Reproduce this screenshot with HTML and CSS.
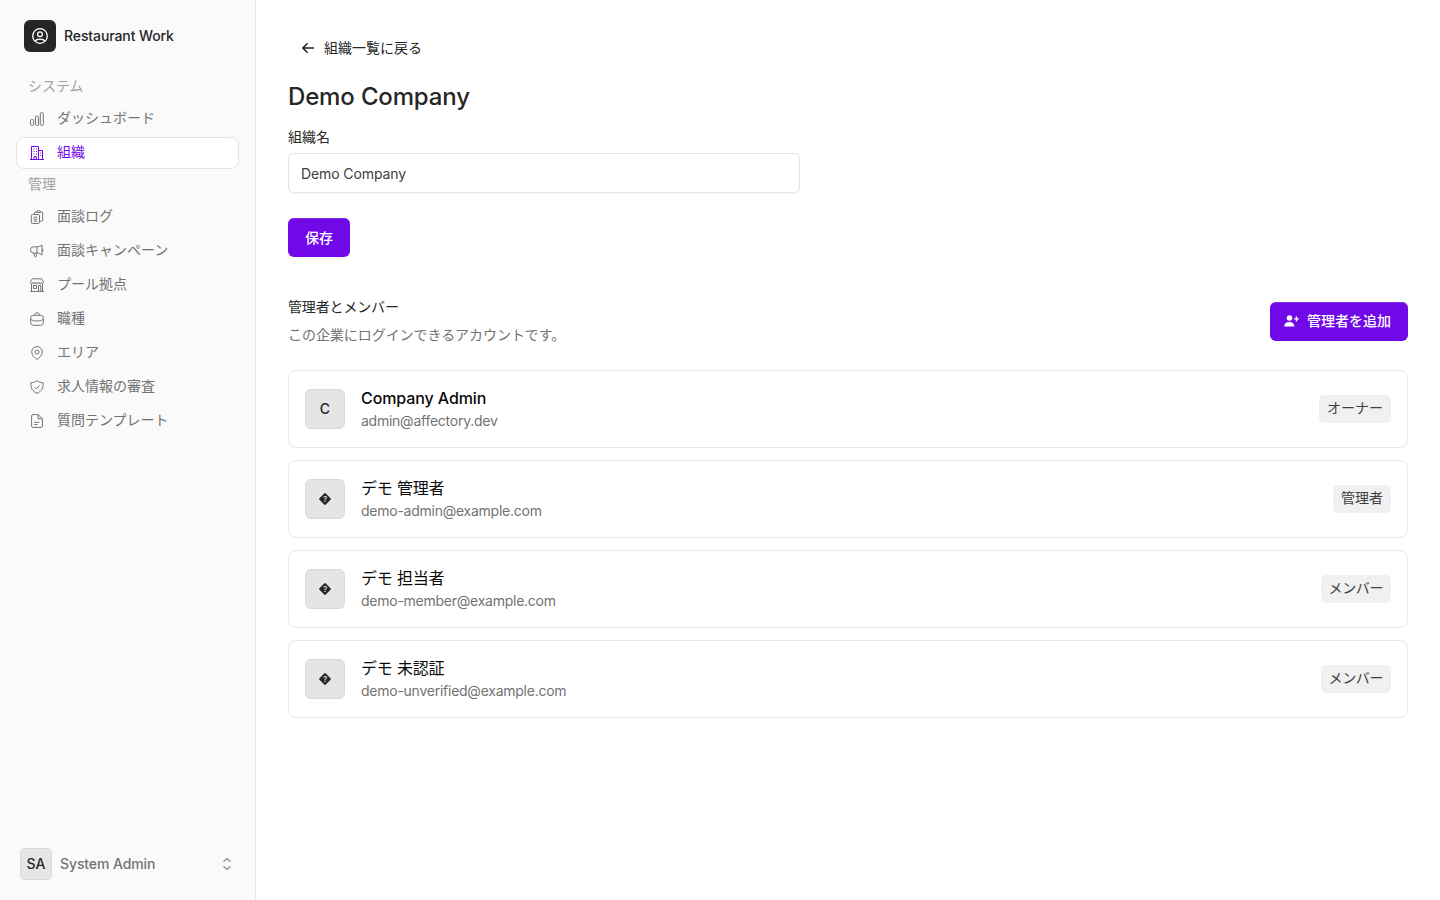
FILE: index.html
```html
<!DOCTYPE html>
<html lang="ja">
<head>
  <meta charset="UTF-8" />
  <meta name="viewport" content="width=device-width, initial-scale=1.0" />
  <title>Restaurant Work</title>
  <link rel="stylesheet" href="styles.css">
</head>
<body>
  <aside class="sidebar">
    <div class="brand">
      <span class="brand-logo">
        <svg width="18" height="18" viewBox="0 0 18 18"><circle cx="9" cy="9" r="7.3"/><circle cx="9" cy="7.2" r="2.4"/><path d="M4.2 14.3c.7-1.6 2.3-2.1 4.8-2.1s4.1.5 4.8 2.1"/></svg>
      </span>
      <span class="brand-name">Restaurant Work</span>
    </div>

    <nav>
      <div class="nav-label">システム</div>
      <ul class="nav-list">
        <li><a class="nav-item" href="#">
          <svg class="icon" viewBox="0 0 14 14"><rect x=".6" y="7.5" width="3" height="5.9" rx="1"/><rect x="5.5" y="4.2" width="3" height="9.2" rx="1"/><rect x="10.3" y=".6" width="3" height="12.8" rx="1"/></svg>
          <span>ダッシュボード</span></a></li>
        <li><a class="nav-item active" href="#">
          <svg class="icon" viewBox="0 0 14 14"><path d="M0 13.5h14M1.5 13.5V.5h7v13M8.500 4.500h4v9M3.500 3h1M6 3h1M3.500 5.500h1M6 5.500h1M3.500 8h1M6 8h1M10.200 7h1M10.200 9.500h1M4 13.500v-3h2.200v3"/></svg>
          <span>組織</span></a></li>
      </ul>
      <div class="nav-label">管理</div>
      <ul class="nav-list">
        <li><a class="nav-item" href="#">
          <svg class="icon" viewBox="0 0 14 14"><path d="M4.500 4V3c0-.8.5-1.300 1.300-1.300h.7M10.500 1.700h.9c.8 0 1.300.5 1.300 1.300v7c0 .8-.5 1.300-1.300 1.300H9.500M6.500 2.500c0-1.200.7-1.900 2-1.900s2 .7 2 1.900z"/><rect x="1.300" y="4.500" width="8.200" height="9" rx="1.300"/><path d="M3.500 7.200h3.800M3.500 9.200h3.800M3.500 11.200h3.800"/></svg>
          <span>面談ログ</span></a></li>
        <li><a class="nav-item" href="#">
          <svg class="icon" viewBox="0 0 14 14"><path d="M7 2.800H3.600a3.100 3.100 0 0 0 0 6.200H7c1.800.1 3.500.9 5 2.100V1C10.500 2.100 8.800 2.700 7 2.800zM7 2.800V9M12 4.700c1.300.4 1.300 2.400 0 2.800M3.600 9l1 3.200c.4 1.200 2.200.8 1.900-.4L5.900 9"/></svg>
          <span>面談キャンペーン</span></a></li>
        <li><a class="nav-item" href="#">
          <svg class="icon" viewBox="0 0 14 14"><path d="M2.300.8h9.400l1.700 2.700v1c0 1.400-2.100 1.400-2.100 0 0 1.400-2.200 1.400-2.200 0 0 1.400-2.100 1.400-2.100 0 0 1.400-2.200 1.400-2.200 0 0 1.400-2.100 1.400-2.100 0 0 1.400-2.100 1.400-2.100 0v-1zM1.500 5.600v7.800M12.500 5.600v7.800M0 13.400h14M3.500 7.500h3v3h-3zM8.500 13.400V7.500h2.300v5.900"/></svg>
          <span>プール拠点</span></a></li>
        <li><a class="nav-item" href="#">
          <svg class="icon" viewBox="0 0 14 14"><rect x=".7" y="3.300" width="12.600" height="10" rx="2.600"/><path d="M4.500 3.300c.2-1.700.8-2.500 2.500-2.500s2.300.8 2.500 2.500M.8 7.500c3.500 2 8.900 2 12.400 0"/></svg>
          <span>職種</span></a></li>
        <li><a class="nav-item" href="#">
          <svg class="icon" viewBox="0 0 14 14"><path d="M7 13.500C5 12 1.700 9.300 1.700 5.900a5.300 5.300 0 0 1 10.600 0C12.300 9.300 9 12 7 13.500z"/><circle cx="7" cy="6" r="2"/></svg>
          <span>エリア</span></a></li>
        <li><a class="nav-item" href="#">
          <svg class="icon" viewBox="0 0 14 14"><path d="M7 .7c1.700 1.200 3.600 1.900 6.200 2.100 0 5.200-1.200 8.400-6.200 10.500C2 11.200.8 8 .8 2.800 3.400 2.600 5.300 1.900 7 .7z"/><path d="M4.800 7.300l1.600 1.500L9.300 5.500"/></svg>
          <span>求人情報の審査</span></a></li>
        <li><a class="nav-item" href="#">
          <svg class="icon" viewBox="0 0 14 14"><path d="M8.200.6H2.900c-.8 0-1.300.5-1.300 1.300v10.200c0 .8.5 1.300 1.300 1.300h8.200c.8 0 1.300-.5 1.300-1.300V4.800zM8.200.6v4.200h4.200M4.200 8.300h5.300M4.200 10.500h3.300"/></svg>
          <span>質問テンプレート</span></a></li>
      </ul>
    </nav>

    <div class="user">
      <span class="user-avatar">SA</span>
      <span class="user-name">System Admin</span>
      <svg class="user-toggle" width="10" height="14" viewBox="0 0 10 14"><path d="M1.500 4.800L5 1.500l3.500 3.300M1.500 9.200L5 12.500l3.500-3.300"/></svg>
    </div>
  </aside>

  <main class="content">
    <a class="back" href="#">
      <svg width="12" height="12" viewBox="0 0 12 12"><path d="M5.600 1.200L.9 6l4.700 4.800M1 6h11"/></svg>
      組織一覧に戻る
    </a>
    <h1>Demo Company</h1>

    <form>
      <label for="companyName">組織名</label>
      <input id="companyName" type="text" value="Demo Company" />
      <button class="btn btn-save" type="button">保存</button>
    </form>

    <section>
      <div class="section-header">
        <div>
          <h2>管理者とメンバー</h2>
          <p>この企業にログインできるアカウントです。</p>
        </div>
        <button class="btn btn-add" type="button">
          <svg width="15" height="12" viewBox="0 0 15 12"><circle cx="5.500" cy="3" r="2.800"/><path d="M.2 11.500C.3 8.500 2.200 7 5.300 7s5 1.500 5.100 4.500zM10 3.300h1.800V1.500h1.300v1.800h1.800v1.300h-1.800v1.800h-1.300V4.600H10z"/></svg>
          管理者を追加
        </button>
      </div>

      <ul class="members">
        <li class="member">
          <span class="avatar">C</span>
          <div class="member-info">
            <div class="member-name latin">Company Admin</div>
            <div class="member-mail">admin@affectory.dev</div>
          </div>
          <span class="role">オーナー</span>
        </li>
        <li class="member">
          <span class="avatar"><svg class="unknown" viewBox="0 0 14 14"><rect x="2.500" y="2.500" width="9" height="9" rx="1.200" transform="rotate(45 7 7)"/><text x="7" y="10">?</text></svg></span>
          <div class="member-info">
            <div class="member-name">デモ 管理者</div>
            <div class="member-mail">demo-admin@example.com</div>
          </div>
          <span class="role">管理者</span>
        </li>
        <li class="member">
          <span class="avatar"><svg class="unknown" viewBox="0 0 14 14"><rect x="2.500" y="2.500" width="9" height="9" rx="1.200" transform="rotate(45 7 7)"/><text x="7" y="10">?</text></svg></span>
          <div class="member-info">
            <div class="member-name">デモ 担当者</div>
            <div class="member-mail">demo-member@example.com</div>
          </div>
          <span class="role kana">メンバー</span>
        </li>
        <li class="member">
          <span class="avatar"><svg class="unknown" viewBox="0 0 14 14"><rect x="2.500" y="2.500" width="9" height="9" rx="1.200" transform="rotate(45 7 7)"/><text x="7" y="10">?</text></svg></span>
          <div class="member-info">
            <div class="member-name">デモ 未認証</div>
            <div class="member-mail">demo-unverified@example.com</div>
          </div>
          <span class="role kana">メンバー</span>
        </li>
      </ul>
    </section>
  </main>
</body>
</html>
```
FILE: styles.css
```css
* {
  box-sizing: border-box;
}
body {
  margin: 0;
  display: flex;
  height: 100vh;
  overflow: hidden;
  font-family: Inter, "Noto Sans CJK JP", sans-serif;
  font-size: 14px;
  line-height: 20px;
  color: #262626;
  background: #fff;
}
svg {
  fill: none;
  stroke: currentColor;
  flex-shrink: 0;
}
ul {
  list-style: none;
  margin: 0;
  padding: 0;
}
a {
  color: inherit;
  text-decoration: none;
}

/* sidebar */
.sidebar {
  width: 256px;
  display: flex;
  flex-direction: column;
  padding: 20px 16px;
  background: #fafafa;
  border-right: 1px solid #e5e5e5;
}
.brand {
  display: flex;
  align-items: center;
  gap: 8px;
  padding-left: 8px;
  margin-bottom: 19px;
}
.brand-logo {
  width: 32px;
  height: 32px;
  display: grid;
  place-items: center;
  border-radius: 6px;
  background: #262626;
  color: #fff;
}
.brand-logo svg {
  stroke-width: 1.3;
}
.brand-name {
  font-weight: 500;
  letter-spacing: -0.1px;
}
.nav-label {
  height: 32px;
  padding: 5px 12px;
  color: #a1a1a1;
  letter-spacing: -0.1px;
}
.nav-list {
  display: grid;
  gap: 2px;
}
.nav-item {
  display: flex;
  align-items: center;
  gap: 13px;
  height: 32px;
  padding: 0 13px;
  border: 1px solid transparent;
  border-radius: 8px;
  color: #737373;
}
.nav-item span {
  padding-bottom: 2px;
}
.nav-item.active {
  color: #7008e7;
  background: #fff;
  border-color: #e5e5e5;
}
.icon {
  width: 14px;
  height: 14px;
  stroke-width: 1;
}
.user {
  margin-top: auto;
  display: flex;
  align-items: center;
  gap: 8px;
  padding: 0 7px 0 4px;
}
.user-avatar {
  width: 32px;
  height: 32px;
  display: grid;
  place-items: center;
  border: 1px solid #d9d9d9;
  border-radius: 5px;
  background: #e5e5e5;
  font-weight: 500;
}
.user-name {
  flex: 1;
  color: #737373;
  font-weight: 500;
  letter-spacing: -0.1px;
}
.user-toggle {
  color: #999;
  stroke-width: 1.5;
}

/* main column */
.content {
  flex: 1;
  padding: 28px 32px;
}
.back {
  display: inline-flex;
  align-items: center;
  gap: 10px;
  height: 40px;
  padding-left: 14px;
}
.back svg {
  stroke-width: 1.5;
}
h1 {
  margin: 13px 0 14px;
  font-size: 24px;
  line-height: 32px;
  font-weight: 500;
  letter-spacing: -0.15px;
}
form {
  width: 512px;
  display: flex;
  flex-direction: column;
  align-items: flex-start;
}
input {
  width: 100%;
  height: 40px;
  margin: 6px 0 25px;
  padding: 0 12px;
  border: 1px solid #e5e5e5;
  border-radius: 6px;
  box-shadow: 0 1px 1px rgba(0, 0, 0, 0.04);
  color: #404040;
  font: inherit;
  letter-spacing: -0.1px;
}
.btn {
  height: 39px;
  border: 0;
  border-radius: 6px;
  background: #7008e7;
  box-shadow: inset 0 1px 0 #8530ec;
  color: #fff;
  font: inherit;
  font-weight: 500;
}
.btn-save {
  width: 62px;
}
.btn-add {
  display: flex;
  align-items: center;
  gap: 8px;
  width: 138px;
  padding: 0 14px;
}
.btn-add svg {
  fill: currentColor;
  stroke: none;
}
.section-header {
  display: flex;
  align-items: center;
  justify-content: space-between;
  margin: 40px 0 25px;
}
h2 {
  margin: 0 0 8px;
  font-size: 14px;
  line-height: 20px;
  font-weight: 400;
  letter-spacing: -0.15px;
}
.section-header p {
  margin: 0;
  color: #737373;
  letter-spacing: -0.05px;
}

/* member cards */
.members {
  display: grid;
  gap: 12px;
}
.member {
  display: flex;
  align-items: center;
  gap: 16px;
  height: 78px;
  padding: 0 16px 1px;
  border: 1px solid #e8e8e8;
  border-radius: 8px;
}
.avatar {
  width: 40px;
  height: 40px;
  display: grid;
  place-items: center;
  border: 1px solid #d9d9d9;
  border-radius: 6px;
  background: #e5e5e5;
  font-weight: 500;
}
.unknown {
  width: 14px;
  height: 14px;
  fill: #262626;
  stroke: none;
}
.unknown text {
  fill: #e5e5e5;
  font-size: 8px;
  text-anchor: middle;
}
.member-info {
  flex: 1;
}
.member-name {
  font-size: 16px;
  line-height: 24px;
  color: #0a0a0a;
  letter-spacing: -0.2px;
}
.member-name.latin {
  font-weight: 500;
  letter-spacing: -0.1px;
}
.member-mail {
  line-height: 22px;
  color: #737373;
  letter-spacing: -0.25px;
}
.role {
  height: 28px;
  padding: 3px 8px 5px;
  border-radius: 5px;
  background: #f0f0f0;
  color: #404040;
}
.role.kana {
  letter-spacing: -0.4px;
}
```
